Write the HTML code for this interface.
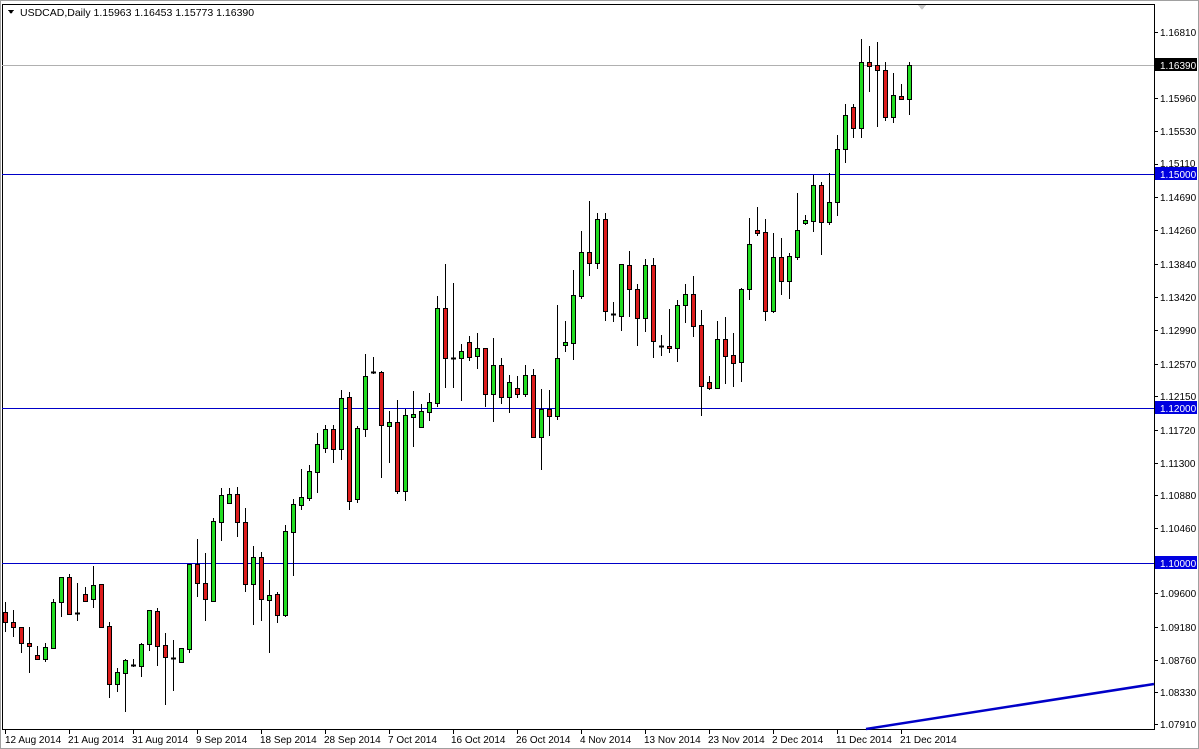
<!DOCTYPE html>
<html><head><meta charset="utf-8"><style>
html,body{margin:0;padding:0;background:#fff;width:1199px;height:749px;overflow:hidden;font-family:"Liberation Sans",sans-serif}
svg{position:absolute;left:0;top:0}
</style></head><body>
<svg id="s" width="1199" height="749" xmlns="http://www.w3.org/2000/svg" font-family="'Liberation Sans',sans-serif" font-size="10" shape-rendering="crispEdges">
<rect x="0" y="0" width="1199" height="749" fill="#fff"/>
<rect x="0.5" y="0.5" width="1198" height="748" fill="none" stroke="#a0a0a0"/>
<rect x="2.5" y="4.5" width="1152" height="725" fill="none" stroke="#000"/>
<line x1="2" y1="65.5" x2="1154" y2="65.5" stroke="#b0b0b0"/>
<line x1="2" y1="174.5" x2="1154" y2="174.5" stroke="#0000c8"/>
<line x1="2" y1="408.5" x2="1154" y2="408.5" stroke="#0000c8"/>
<line x1="2" y1="563.5" x2="1154" y2="563.5" stroke="#0000c8"/>
<polygon points="918,5 926,5 922,10" fill="#c8c8c8"/>
<g id="c"></g>
<line x1="866" y1="729" x2="1154" y2="684" stroke="#0000c8" stroke-width="2.5" shape-rendering="auto"/>
<polygon points="8,10 14,10 11,14" fill="#000"/>
<text x="20" y="16" font-size="10.5" fill="#000">USDCAD,Daily  1.15963 1.16453 1.15773 1.16390</text>
<g fill="#000" font-size="10">
<text x="1160" y="36">1.16810</text>
<text x="1160" y="102">1.15960</text>
<text x="1160" y="135">1.15530</text>
<text x="1160" y="167">1.15110</text>
<text x="1160" y="201">1.14690</text>
<text x="1160" y="234">1.14260</text>
<text x="1160" y="268">1.13840</text>
<text x="1160" y="301">1.13420</text>
<text x="1160" y="334">1.12990</text>
<text x="1160" y="368">1.12570</text>
<text x="1160" y="400">1.12150</text>
<text x="1160" y="434">1.11720</text>
<text x="1160" y="467">1.11300</text>
<text x="1160" y="499">1.10880</text>
<text x="1160" y="532">1.10460</text>
<text x="1160" y="597">1.09600</text>
<text x="1160" y="631">1.09180</text>
<text x="1160" y="664">1.08760</text>
<text x="1160" y="696">1.08330</text>
<text x="1160" y="728">1.07910</text>
</g>
<g stroke="#000">
<line x1="1154" y1="32.5" x2="1158" y2="32.5"/><line x1="1154" y1="98.5" x2="1158" y2="98.5"/><line x1="1154" y1="131.5" x2="1158" y2="131.5"/><line x1="1154" y1="164.5" x2="1158" y2="164.5"/><line x1="1154" y1="197.5" x2="1158" y2="197.5"/><line x1="1154" y1="230.5" x2="1158" y2="230.5"/><line x1="1154" y1="264.5" x2="1158" y2="264.5"/><line x1="1154" y1="297.5" x2="1158" y2="297.5"/><line x1="1154" y1="330.5" x2="1158" y2="330.5"/><line x1="1154" y1="364.5" x2="1158" y2="364.5"/><line x1="1154" y1="396.5" x2="1158" y2="396.5"/><line x1="1154" y1="430.5" x2="1158" y2="430.5"/><line x1="1154" y1="463.5" x2="1158" y2="463.5"/><line x1="1154" y1="495.5" x2="1158" y2="495.5"/><line x1="1154" y1="528.5" x2="1158" y2="528.5"/><line x1="1154" y1="593.5" x2="1158" y2="593.5"/><line x1="1154" y1="627.5" x2="1158" y2="627.5"/><line x1="1154" y1="660.5" x2="1158" y2="660.5"/><line x1="1154" y1="692.5" x2="1158" y2="692.5"/><line x1="1154" y1="724.5" x2="1158" y2="724.5"/>
</g>
<rect x="1155" y="58" width="42" height="13" fill="#000"/>
<text x="1160" y="69" fill="#fff">1.16390</text>
<rect x="1155" y="167" width="42" height="13" fill="#0000e0"/>
<text x="1160" y="178" fill="#fff">1.15000</text>
<rect x="1155" y="401" width="42" height="13" fill="#0000e0"/>
<text x="1160" y="412" fill="#fff">1.12000</text>
<rect x="1155" y="556" width="42" height="13" fill="#0000e0"/>
<text x="1160" y="567" fill="#fff">1.10000</text>
<g fill="#000" font-size="10">
<text x="5" y="743">12 Aug 2014</text>
<text x="68" y="743">21 Aug 2014</text>
<text x="132" y="743">31 Aug 2014</text>
<text x="196" y="743">9 Sep 2014</text>
<text x="260" y="743">18 Sep 2014</text>
<text x="324" y="743">28 Sep 2014</text>
<text x="388" y="743">7 Oct 2014</text>
<text x="451" y="743">16 Oct 2014</text>
<text x="516" y="743">26 Oct 2014</text>
<text x="580" y="743">4 Nov 2014</text>
<text x="644" y="743">13 Nov 2014</text>
<text x="708" y="743">23 Nov 2014</text>
<text x="772" y="743">2 Dec 2014</text>
<text x="836" y="743">11 Dec 2014</text>
<text x="900" y="743">21 Dec 2014</text>
</g>
<g stroke="#000">
<line x1="5.5" y1="730" x2="5.5" y2="734"/><line x1="69.5" y1="730" x2="69.5" y2="734"/><line x1="133.5" y1="730" x2="133.5" y2="734"/><line x1="197.5" y1="730" x2="197.5" y2="734"/><line x1="261.5" y1="730" x2="261.5" y2="734"/><line x1="325.5" y1="730" x2="325.5" y2="734"/><line x1="389.5" y1="730" x2="389.5" y2="734"/><line x1="453.5" y1="730" x2="453.5" y2="734"/><line x1="517.5" y1="730" x2="517.5" y2="734"/><line x1="581.5" y1="730" x2="581.5" y2="734"/><line x1="645.5" y1="730" x2="645.5" y2="734"/><line x1="709.5" y1="730" x2="709.5" y2="734"/><line x1="773.5" y1="730" x2="773.5" y2="734"/><line x1="837.5" y1="730" x2="837.5" y2="734"/><line x1="901.5" y1="730" x2="901.5" y2="734"/>
</g>
</svg>
<script>
var D=[[602,632,612,622,'r'],[610,637,622,627,'r'],[627,653,627,643,'r'],[627,673,643,646,'r'],[646,660,655,659,'r'],[643,662,647,659,'g'],[599,649,602,648,'g'],[577,617,577,602,'g'],[574,615,577,614,'r'],[583,621,613,613,'d'],[587,602,594,601,'r'],[566,608,585,599,'g'],[584,628,584,627,'r'],[622,698,626,684,'r'],[668,692,672,684,'g'],[659,712,660,673,'g'],[659,667,665,665,'d'],[643,677,644,666,'g'],[610,651,610,644,'g'],[608,666,611,646,'r'],[633,705,645,657,'r'],[640,691,658,658,'d'],[648,663,648,662,'g'],[564,653,564,649,'g'],[539,597,564,583,'r'],[553,621,583,599,'r'],[518,602,521,601,'g'],[488,541,495,522,'g'],[488,503,494,503,'g'],[487,537,494,522,'r'],[508,592,522,584,'r'],[546,625,557,584,'g'],[552,621,557,599,'r'],[580,653,595,600,'g'],[592,623,594,615,'r'],[525,617,531,615,'g'],[499,576,504,532,'g'],
[469,510,497,505,'g'],[465,501,471,498,'g'],[433,493,444,472,'g'],[425,453,429,448,'g'],[425,463,429,449,'r'],[390,460,398,449,'g'],[392,510,397,501,'r'],[426,503,428,499,'g'],[354,437,376,429,'g'],[357,374,372,372,'d'],[371,478,372,425,'r'],[411,463,422,426,'g'],[400,494,422,491,'r'],[409,501,415,491,'g'],[391,447,414,417,'g'],[404,428,411,427,'g'],[393,421,402,412,'g'],[296,407,308,403,'g'],[264,388,308,358,'r'],[283,388,358,358,'d'],[344,401,351,358,'g'],[336,361,342,357,'r'],[333,369,348,356,'g'],[348,407,348,394,'r'],[338,422,365,394,'g'],[358,404,365,397,'r'],[375,413,382,397,'g'],[376,398,388,394,'r'],[365,397,375,394,'g'],[369,437,375,437,'r'],[389,470,409,437,'g'],[390,436,409,416,'r'],[305,420,358,416,'g'],[321,352,342,345,'g'],
[270,360,295,343,'g'],[231,299,252,296,'g'],[201,276,252,263,'r'],[213,269,219,263,'g'],[213,321,219,311,'r'],[302,322,314,314,'d'],[264,331,264,316,'g'],[251,317,265,289,'r'],[284,346,289,318,'r'],[259,332,265,318,'g'],[258,358,265,341,'r'],[335,356,346,346,'d'],[309,353,346,348,'r'],[300,362,305,348,'g'],[284,323,294,305,'g'],[276,337,294,326,'r'],[310,416,325,386,'r'],[376,390,382,388,'r'],[321,389,339,388,'g'],[317,384,339,356,'r'],[333,387,355,363,'r'],[288,382,289,362,'g'],[218,300,244,289,'g'],[207,236,230,233,'r'],[219,321,232,311,'r'],[233,313,257,311,'g'],[238,295,257,281,'r'],[253,299,256,281,'g'],
[193,260,230,257,'g'],[215,225,220,223,'g'],[175,232,185,221,'g'],[182,255,185,222,'r'],[173,225,202,222,'g'],[135,216,149,202,'g'],[104,163,115,149,'g'],[104,138,107,128,'r'],[39,138,62,128,'g'],[46,92,62,66,'r'],[42,127,65,70,'r'],[62,121,70,117,'r'],[73,123,95,117,'g'],[84,100,96,99,'r'],[62,115,65,99,'g']];
var g=document.getElementById('c'),h='';
for(var i=0;i<D.length;i++){var d=D[i],x=5+8*i;
h+='<line x1="'+(x+.5)+'" y1="'+d[0]+'" x2="'+(x+.5)+'" y2="'+d[1]+'" stroke="#000"/>';
if(d[3]-d[2]<2){h+='<line x1="'+(x-2)+'" y1="'+(d[2]+.5)+'" x2="'+(x+3)+'" y2="'+(d[2]+.5)+'" stroke="#000" stroke-width="2"/>';}
else h+='<rect x="'+(x-1.5)+'" y="'+(d[2]+.5)+'" width="4" height="'+(d[3]-d[2])+'" fill="'+(d[4]=='g'?'#22dd22':'#dd1c1c')+'" stroke="#000"/>';}
g.innerHTML=h;
</script>
</body></html>
